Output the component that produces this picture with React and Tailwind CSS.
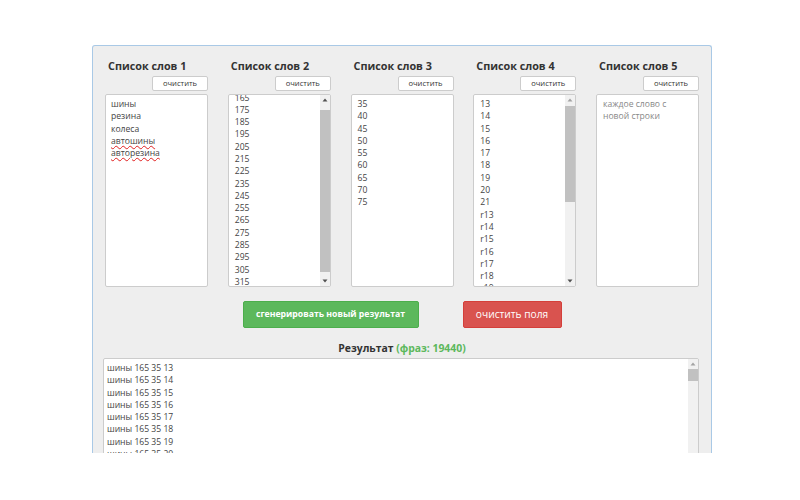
import React from "react";

function Up({ light }) {
  return (
    <svg width="10" height="10" viewBox="0 0 10 10" className="block">
      <path d="M2.5 6.5 L5 3.5 L7.5 6.5 Z" fill={light ? "#a3a3a3" : "#505050"} />
    </svg>
  );
}
function Down({ light }) {
  return (
    <svg width="10" height="10" viewBox="0 0 10 10" className="block">
      <path d="M2.5 3.5 L5 6.5 L7.5 3.5 Z" fill={light ? "#a3a3a3" : "#505050"} />
    </svg>
  );
}

function Title({ children }) {
  return (
    <div className="mt-[14px] h-[12px] pl-[3px] text-[10.8px] leading-[12px] font-bold text-[#333] whitespace-nowrap">
      {children}
    </div>
  );
}

function ClearBtn() {
  return (
    <div className="mt-[4px] flex justify-end">
      <div className="w-[56px] h-[15px] bg-white border border-[#cccccc] rounded-[2px] flex items-center justify-center text-[7.6px] text-[#333] leading-none">
        очистить
      </div>
    </div>
  );
}

function Lines({ items }) {
  return items.map((t, i) => (
    <div key={i} className="h-[12.3px] leading-[12.3px] whitespace-nowrap">
      {t}
    </div>
  ));
}

const col2 = ["165","175","185","195","205","215","225","235","245","255","265","275","285","295","305","315","325"];
const col3 = ["35","40","45","50","55","60","65","70","75"];
const col4 = ["13","14","15","16","17","18","19","20","21","r13","r14","r15","r16","r17","r18","r19"];
const result = ["13","14","15","16","17","18","19","20","21","r13"].map((x) => "шины 165 35 " + x);

export default function App() {
  return (
    <div
      className="w-[800px] h-[500px] bg-white overflow-hidden"
      style={{ fontFamily: '"Open Sans", "DejaVu Sans", sans-serif' }}
    >
      <div className="pt-[45px] pl-[92px]">
        <div className="w-[620px] h-[408px] overflow-hidden border border-b-0 border-[#a9c9e6] rounded-t-[3px] bg-[#eeeeee]">
          <div className="flex gap-[19.75px] pl-[12px]">
            {/* Column 1 */}
            <div className="w-[103px] flex flex-col">
              <Title>Список слов 1</Title>
              <ClearBtn />
              <div className="mt-[3px] h-[193px] bg-white border border-[#cccccc] rounded-[2px] overflow-hidden pt-[3px] pl-[5px] text-[8.6px] text-[#444]">
                <Lines items={["шины", "резина", "колеса"]} />
                <div className="h-[12.3px] leading-[12.3px]">
                  <span className="underline decoration-wavy decoration-[#e02020] decoration-[1px] underline-offset-[1px]">автошины</span>
                </div>
                <div className="h-[12.3px] leading-[12.3px]">
                  <span className="underline decoration-wavy decoration-[#e02020] decoration-[1px] underline-offset-[1px]">авторезина</span>
                </div>
              </div>
            </div>

            {/* Column 2 */}
            <div className="w-[103px] flex flex-col">
              <Title>Список слов 2</Title>
              <ClearBtn />
              <div className="mt-[3px] h-[193px] bg-white border border-[#cccccc] rounded-[2px] overflow-hidden flex">
                <div className="flex-1 overflow-hidden pl-[6px] text-[8.6px] text-[#444]">
                  <div className="mt-[-3.5px]">
                    <Lines items={col2} />
                  </div>
                </div>
                <div className="w-[10px] bg-[#f1f1f1] flex flex-col">
                  <Up />
                  <div className="flex-1">
                    <div className="mt-[5px] h-[162px] bg-[#c1c1c1]" />
                  </div>
                  <Down />
                </div>
              </div>
            </div>

            {/* Column 3 */}
            <div className="w-[103px] flex flex-col">
              <Title>Список слов 3</Title>
              <ClearBtn />
              <div className="mt-[3px] h-[193px] bg-white border border-[#cccccc] rounded-[2px] overflow-hidden pt-[3px] pl-[6px] text-[8.6px] text-[#444]">
                <Lines items={col3} />
              </div>
            </div>

            {/* Column 4 */}
            <div className="w-[103px] flex flex-col">
              <Title>Список слов 4</Title>
              <ClearBtn />
              <div className="mt-[3px] h-[193px] bg-white border border-[#cccccc] rounded-[2px] overflow-hidden flex">
                <div className="flex-1 overflow-hidden pt-[3px] pl-[6px] text-[8.6px] text-[#444]">
                  <Lines items={col4} />
                </div>
                <div className="w-[10px] bg-[#f1f1f1] flex flex-col">
                  <Up light />
                  <div className="flex-1">
                    <div className="mt-[1px] h-[96px] bg-[#c1c1c1]" />
                  </div>
                  <Down />
                </div>
              </div>
            </div>

            {/* Column 5 */}
            <div className="w-[103px] flex flex-col">
              <Title>Список слов 5</Title>
              <ClearBtn />
              <div className="mt-[3px] h-[193px] bg-white border border-[#cccccc] rounded-[2px] overflow-hidden pt-[3px] pl-[6px] text-[8.6px] text-[#888]">
                <Lines items={["каждое слово с", "новой строки"]} />
              </div>
            </div>
          </div>

          {/* Buttons */}
          <div className="mt-[14px] flex justify-center gap-[44px]">
            <div className="w-[176px] h-[27px] bg-[#5cb85c] border border-[#4cae4c] rounded-[2px] flex items-center justify-center text-white font-bold text-[8.7px]">
              сгенерировать новый результат
            </div>
            <div className="w-[99px] h-[27px] bg-[#d9534f] border border-[#d43f3a] rounded-[2px] flex items-center justify-center text-white text-[10.2px]">
              очистить поля
            </div>
          </div>

          {/* Result heading */}
          <div className="mt-[13px] h-[14px] leading-[14px] text-center text-[10.4px] font-bold text-[#333]">
            Результат <span className="text-[#5cb85c]">(фраз: 19440)</span>
          </div>

          {/* Result box */}
          <div className="mt-[3px] ml-[10px] w-[596px] h-[200px] bg-white border border-[#cccccc] rounded-[2px] overflow-hidden flex">
            <div className="flex-1 overflow-hidden pt-[3px] pl-[3px] text-[8.6px] text-[#444]">
              <Lines items={result} />
            </div>
            <div className="w-[10px] bg-[#f1f1f1] flex flex-col">
              <Up light />
              <div className="h-[12px] bg-[#c1c1c1]" />
            </div>
          </div>
        </div>
      </div>
    </div>
  );
}
